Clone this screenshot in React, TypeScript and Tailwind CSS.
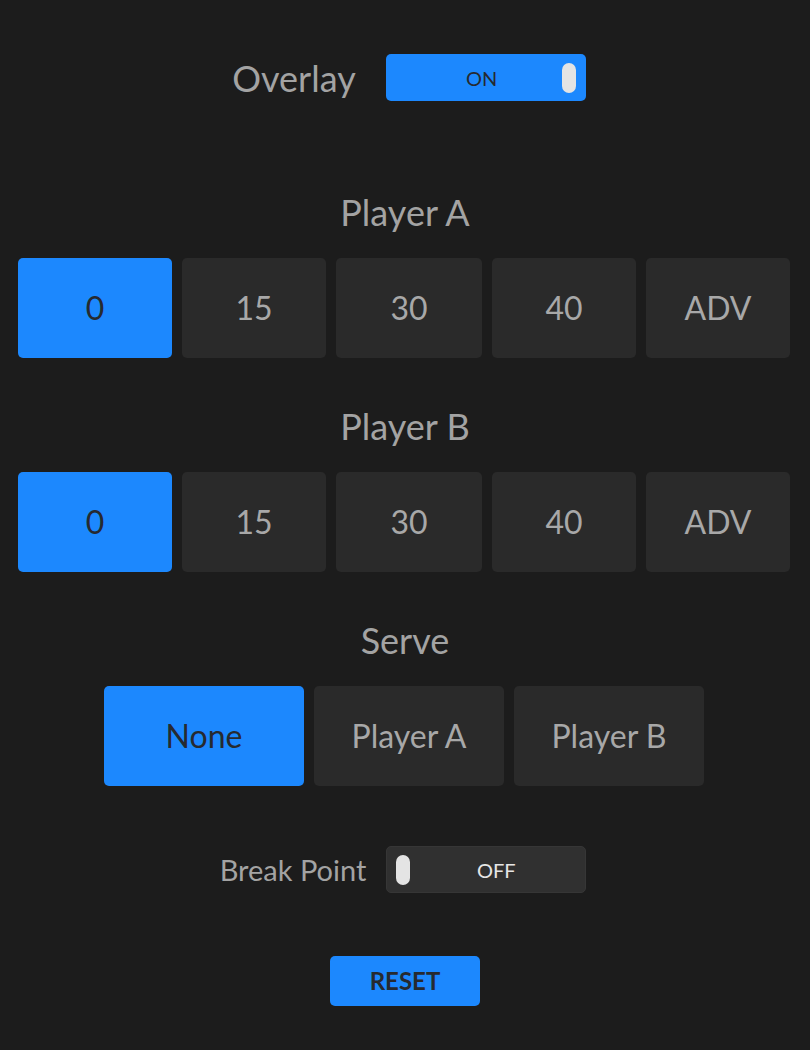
import React, { useState } from 'react';

const POINTS = ['0', '15', '30', '40', 'ADV'];
const SERVE = ['None', 'Player A', 'Player B'];

const font = { fontFamily: 'Lato, "Noto Sans", sans-serif' };

const Toggle: React.FC<{ on: boolean; onClick: () => void }> = ({ on, onClick }) => (
  <button
    onClick={onClick}
    className={`relative w-[200px] h-[47px] rounded-[5px] flex items-center justify-center text-[20px] ${
      on ? 'bg-[#1c88fe] text-[#262a30]' : 'bg-[#303030] text-[#e6e6e6] border border-[#363636]'
    }`}
  >
    <span className={on ? 'mr-[8px]' : 'ml-[20px]'}>{on ? 'ON' : 'OFF'}</span>
    <span
      className={`absolute top-1/2 -translate-y-1/2 w-[14px] h-[30px] rounded-full bg-[#e4e4e4] ${
        on ? 'right-[10px]' : 'left-[9px]'
      }`}
    />
  </button>
);

const ScoreRow: React.FC<{ value: string; onChange: (v: string) => void }> = ({ value, onChange }) => (
  <div className="grid grid-cols-[154px_144px_146px_144px_144px] gap-[10px] px-[18px]">
    {POINTS.map((p) => (
      <button
        key={p}
        onClick={() => onChange(p)}
        className={`h-[100px] rounded-[5px] text-[32px] ${
          value === p ? 'bg-[#1c88fe] text-[#262a30]' : 'bg-[#2a2a2a] text-[#a8a8a8]'
        }`}
      >
        {p}
      </button>
    ))}
  </div>
);

export default function App() {
  const [overlay, setOverlay] = useState(true);
  const [a, setA] = useState('0');
  const [b, setB] = useState('0');
  const [serve, setServe] = useState('None');
  const [breakPoint, setBreakPoint] = useState(false);

  const reset = () => {
    setA('0');
    setB('0');
    setServe('None');
    setBreakPoint(false);
  };

  return (
    <div className="w-[810px] h-[1050px] bg-[#1c1c1c] flex flex-col items-center pt-[54px]" style={font}>
      <div className="flex items-center gap-[30px] ml-[8px]">
        <span className="text-[36px] text-[#a3a3a3] leading-none">Overlay</span>
        <Toggle on={overlay} onClick={() => setOverlay(!overlay)} />
      </div>

      <h2 className="mt-[91px] text-[36px] leading-[40px] text-[#a3a3a3]">Player A</h2>
      <div className="mt-[26px] w-full">
        <ScoreRow value={a} onChange={setA} />
      </div>

      <h2 className="mt-[48px] text-[36px] leading-[40px] text-[#a3a3a3]">Player B</h2>
      <div className="mt-[26px] w-full">
        <ScoreRow value={b} onChange={setB} />
      </div>

      <h2 className="mt-[48px] text-[36px] leading-[40px] text-[#a3a3a3]">Serve</h2>
      <div className="mt-[26px] mr-[2px] grid grid-cols-[200px_190px_190px] gap-[10px]">
        {SERVE.map((s) => (
          <button
            key={s}
            onClick={() => setServe(s)}
            className={`h-[100px] rounded-[5px] text-[32px] ${
              serve === s ? 'bg-[#1c88fe] text-[#262a30]' : 'bg-[#2a2a2a] text-[#a8a8a8]'
            }`}
          >
            {s}
          </button>
        ))}
      </div>

      <div className="mt-[60px] flex items-center gap-[20px] mr-[4px]">
        <span className="text-[29px] text-[#a3a3a3]">Break Point</span>
        <Toggle on={breakPoint} onClick={() => setBreakPoint(!breakPoint)} />
      </div>

      <button
        onClick={reset}
        className="mt-[63px] w-[150px] h-[50px] rounded-[5px] bg-[#1c88fe] text-[#262a30] text-[24px] font-bold"
      >
        RESET
      </button>
    </div>
  );
}
